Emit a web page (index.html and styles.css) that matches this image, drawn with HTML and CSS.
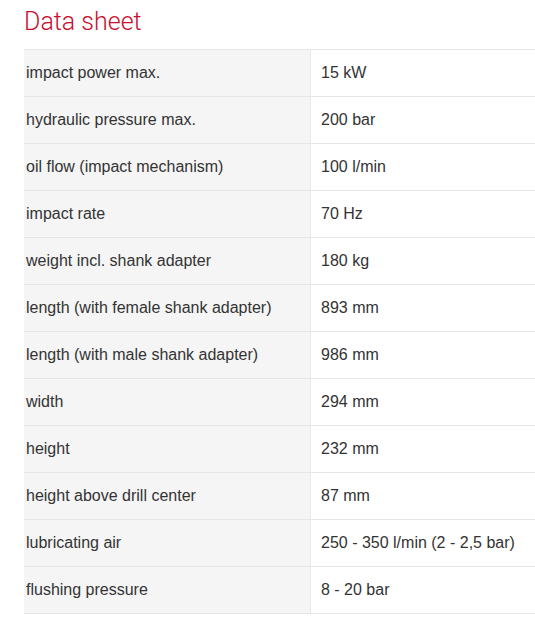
FILE: index.html
```html
<!DOCTYPE html>
<html>
<head>
<meta charset="utf-8">
<link rel="stylesheet" href="styles.css">
</head>
<body>
<div class="page">
  <h1 class="title">Data sheet</h1>
  <table class="sheet">
    <tr><td class="key">impact power max.</td><td class="val">15 kW</td></tr>
    <tr><td class="key">hydraulic pressure max.</td><td class="val">200 bar</td></tr>
    <tr><td class="key">oil flow (impact mechanism)</td><td class="val">100 l/min</td></tr>
    <tr><td class="key">impact rate</td><td class="val">70 Hz</td></tr>
    <tr><td class="key">weight incl. shank adapter</td><td class="val">180 kg</td></tr>
    <tr><td class="key">length (with female shank adapter)</td><td class="val">893 mm</td></tr>
    <tr><td class="key">length (with male shank adapter)</td><td class="val">986 mm</td></tr>
    <tr><td class="key">width</td><td class="val">294 mm</td></tr>
    <tr><td class="key">height</td><td class="val">232 mm</td></tr>
    <tr><td class="key">height above drill center</td><td class="val">87 mm</td></tr>
    <tr><td class="key">lubricating air</td><td class="val">250 - 350 l/min (2 - 2,5 bar)</td></tr>
    <tr><td class="key">flushing pressure</td><td class="val">8 - 20 bar</td></tr>
  </table>
</div>
</body>
</html>
```

FILE: styles.css
```css
html, body {
  margin: 0;
  padding: 0;
  background: #ffffff;
}
.page {
  padding: 6px 0 0 24px;
}
.title {
  margin: 0 0 11px 0;
  font-family: Roboto, "Liberation Sans", sans-serif;
  font-weight: 300;
  font-size: 25px;
  line-height: 32px;
  color: #c8102e;
}
.sheet {
  width: 511px;
  border-collapse: collapse;
  font-family: "Liberation Sans", Arial, sans-serif;
  font-size: 16px;
  color: #333333;
}
.sheet td {
  height: 45px;
  padding: 0 0 1px 0;
  border-top: 1px solid #e6e6e6;
  border-bottom: 1px solid #e6e6e6;
  vertical-align: middle;
}
.key {
  width: 284px;
  padding-left: 2px !important;
  background: #f5f5f5;
  border-right: 1px solid #e9e9e9;
}
.val {
  padding-left: 10px !important;
  background: #ffffff;
}
```
